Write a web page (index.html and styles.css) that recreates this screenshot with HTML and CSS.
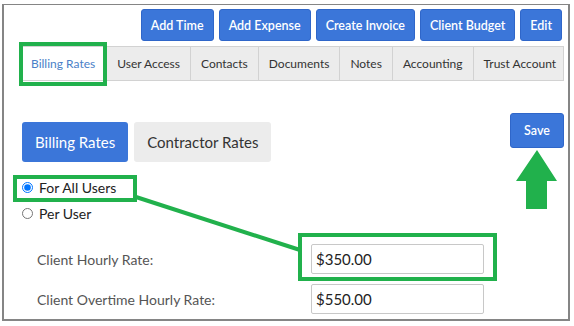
FILE: index.html
```html
<!DOCTYPE html>
<html lang="en">
<head>
    <meta charset="UTF-8">
    <meta name="viewport" content="width=device-width, initial-scale=1.0">
    <title>Client Billing Rates</title>
    <link rel="stylesheet" href="styles.css">
</head>
<body>
    <div class="frame">
        <div class="toolbar">
            <button class="btn btn-primary">Add Time</button>
            <button class="btn btn-primary">Add Expense</button>
            <button class="btn btn-primary">Create Invoice</button>
            <button class="btn btn-primary">Client Budget</button>
            <button class="btn btn-primary">Edit</button>
        </div>

        <div class="tabs">
            <div class="tab active">Billing Rates</div>
            <div class="tab">User Access</div>
            <div class="tab">Contacts</div>
            <div class="tab">Documents</div>
            <div class="tab">Notes</div>
            <div class="tab">Accounting</div>
            <div class="tab">Trust Account</div>
        </div>

        <div class="rates-head">
            <div class="subtabs">
                <button class="subtab selected">Billing Rates</button>
                <button class="subtab">Contractor Rates</button>
            </div>
            <button class="btn btn-primary btn-save">Save</button>
        </div>

        <div class="radio-list">
            <label class="radio"><input type="radio" name="scope" checked> For All Users</label>
            <label class="radio"><input type="radio" name="scope"> Per User</label>
        </div>

        <div class="rate-form">
            <label class="rate-label">Client Hourly Rate:</label>
            <input class="rate-input" type="text" value="$350.00">
            <label class="rate-label">Client Overtime Hourly Rate:</label>
            <input class="rate-input" type="text" value="$550.00">
        </div>
    </div>

    <!-- callouts drawn over the screenshot -->
    <svg class="callouts" width="574" height="326" viewBox="0 0 574 326">
        <g fill="none" stroke="#21b14c" stroke-width="4">
            <rect x="21" y="44" width="84" height="40"/>
            <rect x="15" y="177" width="120" height="23"/>
            <rect x="300" y="235" width="195" height="44"/>
            <line x1="136" y1="197" x2="300" y2="250"/>
        </g>
        <polygon fill="#21b14c" points="537,150 557,181 547,181 547,209 526,209 526,181 516,181"/>
    </svg>
</body>
</html>
```

FILE: styles.css
```css
body, html {
    margin: 0;
    padding: 0;
    width: 100%;
    height: 100%;
    overflow: hidden;
    background-color: #ffffff;
    font-family: Lato, "Open Sans", sans-serif;
    color: #333;
}
.frame {
    box-sizing: border-box;
    width: 568px;
    height: 317px;
    margin: 4px 0 0 2px;
    border: 2px solid #858585;
    border-top-width: 1px;
    display: flex;
    flex-direction: column;
}
.toolbar {
    display: flex;
    justify-content: flex-end;
    gap: 5px;
    margin-top: 4px;
    padding-right: 6px;
}
.btn {
    font-family: inherit;
    border-radius: 3px;
    cursor: pointer;
    white-space: nowrap;
}
.btn-primary {
    height: 32px;
    padding: 0 9px;
    border: 1px solid #2f66c9;
    background-color: #3b76d9;
    color: #ffffff;
    font-size: 12.5px;
    font-weight: 600;
}
.tabs {
    display: flex;
    margin: 5px 4px 0 15px;
    height: 35px;
    background-color: #ececec;
    border: 1px solid #d2d2d2;
    box-sizing: border-box;
}
.tab {
    display: flex;
    align-items: center;
    flex-shrink: 0;
    padding: 0 10px;
    font-size: 12px;
    white-space: nowrap;
    color: #333;
    border-right: 1px solid #d2d2d2;
}
.tab.active {
    padding: 0 11px;
    background-color: #ffffff;
    color: #4a7fc8;
}
.tab:last-child {
    flex: 1;
    flex-shrink: 1;
    justify-content: center;
    border-right: none;
}
.rates-head {
    display: flex;
    justify-content: space-between;
    align-items: flex-start;
    margin-top: 32px;
    padding: 0 4px 0 18px;
}
.subtabs {
    display: flex;
    gap: 6px;
    margin-top: 9px;
}
.subtab {
    height: 40px;
    padding: 0 13px;
    border: none;
    border-radius: 3px;
    background-color: #ececec;
    color: #333;
    font-family: inherit;
    font-size: 15px;
    white-space: nowrap;
}
.subtab.selected {
    background-color: #3b76d9;
    color: #ffffff;
}
.btn-save {
    height: 35px;
    width: 54px;
    padding: 0;
}
.radio-list {
    display: flex;
    flex-direction: column;
    margin: 12px 0 0 18px;
}
.radio {
    display: flex;
    align-items: center;
    height: 26px;
    font-size: 14px;
    color: #222;
}
.radio input {
    width: 11px;
    height: 11px;
    margin: 0 6px 0 0;
}
.rate-form {
    display: grid;
    grid-template-columns: 274px 173px;
    row-gap: 10px;
    align-items: center;
    margin: 18px 0 0 33px;
}
.rate-label {
    font-size: 14px;
    color: #555;
}
.rate-input {
    box-sizing: border-box;
    height: 30px;
    padding: 0 4px;
    border: 1px solid #c8c8c8;
    border-radius: 2px;
    font-family: inherit;
    font-size: 15px;
    color: #222;
}
.callouts {
    position: absolute;
    top: 0;
    left: 0;
    pointer-events: none;
}
```
